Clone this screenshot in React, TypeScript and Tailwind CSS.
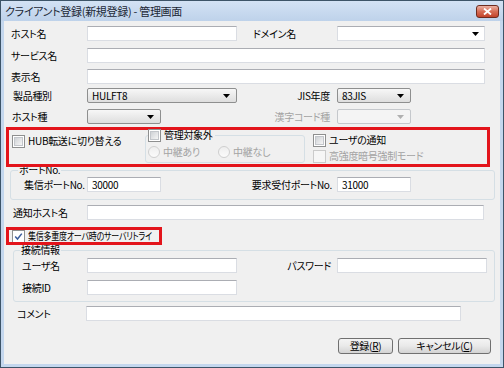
import React from "react";

type BoxProps = { w: string; value?: string };

function Tri({ color = "#000" }: { color?: string }) {
  return (
    <svg width="7" height="4" viewBox="0 0 7 4" className="shrink-0">
      <path d="M0 0h7L3.5 4z" fill={color} />
    </svg>
  );
}

function TextBox({ w, value }: BoxProps) {
  return (
    <div className={`${w} h-[15px] shrink-0 border border-[#dadde3] border-t-[#abadb3] bg-white pl-[4px] text-[10px] leading-[13px]`}>
      {value}
    </div>
  );
}

function ComboEdit({ w }: BoxProps) {
  return (
    <div className={`${w} flex h-[15px] shrink-0 items-center justify-end border border-[#dadde3] border-t-[#abadb3] bg-white pr-[5px]`}>
      <Tri />
    </div>
  );
}

function Select({ w, value, disabled }: BoxProps & { disabled?: boolean }) {
  return (
    <div
      className={`${w} flex h-[15px] shrink-0 items-center justify-between rounded-[2px] border pl-[4px] pr-[6px] text-[10px] leading-[13px] ${
        disabled ? "border-[#c5c8cc] bg-[#f4f4f4]" : "border-[#8e8f8f] bg-linear-to-b from-[#f7f7f7] to-[#dedede]"
      }`}
    >
      <span>{value}</span>
      <Tri color={disabled ? "#b0b0b0" : "#000"} />
    </div>
  );
}

function Check({ checked, disabled }: { checked?: boolean; disabled?: boolean }) {
  return (
    <div
      className={`flex h-[13px] w-[13px] shrink-0 items-center justify-center border ${
        disabled ? "border-[#cbcbcb] bg-[#f6f6f6]" : "border-[#8e8f8f] bg-white"
      }`}
    >
      {!disabled && !checked && <div className="h-[9px] w-[9px] border border-[#c3c6cb] bg-linear-to-br from-[#cfd2d6] to-[#f6f6f6]" />}
      {checked && (
        <svg width="9" height="9" viewBox="0 0 9 9">
          <path d="M1.2 4.6 3.5 7 7.8 1.6" fill="none" stroke="#3a5c9c" strokeWidth="1.5" />
        </svg>
      )}
    </div>
  );
}

function Radio({ label }: { label: string }) {
  return (
    <div className="flex items-center gap-[3px] text-[#a3a3a3]">
      <div className="h-[12px] w-[12px] shrink-0 rounded-full border border-[#cfcfcf] bg-linear-to-b from-[#eeeeee] to-[#fbfbfb]" />
      <span>{label}</span>
    </div>
  );
}

function Button({ w, label, mnemonic }: { w: string; label: string; mnemonic: string }) {
  return (
    <div
      className={`${w} flex h-[16px] items-center justify-center rounded-[3px] border border-[#707070] bg-linear-to-b from-[#f4f4f4] via-[#e9e9e9] to-[#d3d3d3]`}
    >
      {label}(<span className="underline">{mnemonic}</span>)
    </div>
  );
}

export default function App() {
  return (
    <div className="flex h-[368px] w-[504px] flex-col border border-[#3d5468] bg-[#c4d7ee] font-['Noto_Sans_CJK_JP',sans-serif] text-[10px] leading-[14px] tracking-[-0.3px] text-black [font-feature-settings:'palt']">
      {/* Title bar */}
      <div className="flex h-[20px] shrink-0 items-center justify-between bg-linear-to-b from-[#d3e2f4] to-[#bed2ea] pl-[4px] pr-[4px]">
        <span className="text-[11px] text-[#1c2836]">クライアント登録(新規登録) - 管理画面</span>
        <div className="flex h-[13px] w-[23px] items-center justify-center rounded-[3px] border border-[#6e2c1f] bg-linear-to-b from-[#ebb1a4] via-[#d66d55] to-[#c2432a]">
          <svg width="9" height="7" viewBox="0 0 9 7">
            <path d="M1 0.5 8 6.5M8 0.5 1 6.5" stroke="#fff" strokeWidth="1.8" />
          </svg>
        </div>
      </div>

      {/* Client area */}
      <div className="mx-[3px] mb-[3px] flex flex-1 flex-col bg-[#f0f0f0]">
        <div className="mt-[5px] flex h-[15px] items-center">
          <span className="w-[83px] shrink-0 pl-[7px]">ホスト名</span>
          <TextBox w="w-[150px]" />
          <span className="w-[100px] shrink-0 pl-[16px]">ドメイン名</span>
          <ComboEdit w="w-[148px]" />
        </div>

        <div className="mt-[7px] flex h-[15px] items-center">
          <span className="w-[83px] shrink-0 pl-[7px]">サービス名</span>
          <TextBox w="w-[398px]" />
        </div>

        <div className="mt-[6px] flex h-[15px] items-center">
          <span className="w-[83px] shrink-0 pl-[7px]">表示名</span>
          <TextBox w="w-[398px]" />
        </div>

        <div className="mt-[4px] flex h-[15px] items-center">
          <span className="w-[83px] shrink-0 pl-[9px]">製品種別</span>
          <Select w="w-[150px]" value="HULFT8" />
          <span className="w-[100px] shrink-0 pr-[7px] text-right">JIS年度</span>
          <Select w="w-[74px]" value="83JIS" />
        </div>

        <div className="mt-[6px] flex h-[15px] items-center">
          <span className="w-[83px] shrink-0 pl-[8px]">ホスト種</span>
          <Select w="w-[74px]" />
          <span className="w-[176px] shrink-0 pr-[7px] text-right text-[#a3a3a3]">漢字コード種</span>
          <Select w="w-[74px]" disabled />
        </div>

        {/* Highlight 1 */}
        <div className="relative z-10 mt-[3px] ml-[2px] flex h-[40px] w-[484px] border-[3px] border-[#e3141b]">
          <div className="mt-[4px] flex h-[14px] w-[136px] shrink-0 items-center gap-[3px] pl-[3px]">
            <Check />
            <span>HUB転送に切り替える</span>
          </div>
          <fieldset className="-mt-[2px] h-[35px] w-[160px] shrink-0 rounded-[3px] border border-[#d5dfe5] px-[2px]">
            <legend className="flex h-[14px] items-center gap-[3px] pr-[2px]">
              <Check />
              <span>管理対象外</span>
            </legend>
            <div className="mt-[3px] flex h-[14px] items-center">
              <div className="w-[70px]">
                <Radio label="中継あり" />
              </div>
              <Radio label="中継なし" />
            </div>
          </fieldset>
          <div className="ml-[8px] flex flex-col gap-[2px] pt-[3px]">
            <div className="flex h-[14px] items-center gap-[3px]">
              <Check />
              <span>ユーザの通知</span>
            </div>
            <div className="flex h-[14px] items-center gap-[3px]">
              <Check disabled />
              <span className="text-[#a3a3a3]">高強度暗号強制モード</span>
            </div>
          </div>
        </div>

        {/* Port group */}
        <fieldset className="-mt-[4px] ml-[6px] h-[37px] w-[485px] rounded-[3px] border border-[#d5dfe5] pl-[7px]">
          <legend className="px-[1px]">ポートNo.</legend>
          <div className="flex h-[15px] items-center pl-[6px]">
            <span className="w-[63px] shrink-0">集信ポートNo.</span>
            <TextBox w="w-[74px]" value="30000" />
            <span className="w-[176px] shrink-0 pr-[5px] text-right">要求受付ポートNo.</span>
            <TextBox w="w-[74px]" value="31000" />
          </div>
        </fieldset>

        <div className="mt-[5px] flex h-[15px] items-center">
          <span className="w-[83px] shrink-0 pl-[9px]">通知ホスト名</span>
          <TextBox w="w-[397px]" />
        </div>

        {/* Highlight 2 */}
        <div className="relative z-10 mt-[7px] ml-[2px] flex h-[18px] w-[156px] items-center gap-[3px] overflow-hidden border-[3px] border-[#e3141b] pl-[3px]">
          <Check checked />
          <span className="inline-block origin-left scale-x-[0.8] whitespace-nowrap">集信多重度オーバ時のサーバリトライ</span>
        </div>

        {/* Connection group */}
        <fieldset className="-mt-[2px] ml-[9px] h-[59px] w-[482px] rounded-[3px] border border-[#d5dfe5] pl-[6px]">
          <legend className="px-[1px]">接続情報</legend>
          <div className="mt-[1px] flex h-[15px] items-center">
            <span className="w-[67px] shrink-0 pl-[2px]">ユーザ名</span>
            <TextBox w="w-[150px]" />
            <span className="w-[100px] shrink-0 pr-[6px] text-right">パスワード</span>
            <TextBox w="w-[150px]" />
          </div>
          <div className="mt-[7px] flex h-[15px] items-center">
            <span className="w-[67px] shrink-0 pl-[2px]">接続ID</span>
            <TextBox w="w-[150px]" />
          </div>
        </fieldset>

        <div className="mt-[4px] flex h-[15px] items-center">
          <span className="w-[82px] shrink-0 pl-[13px]">コメント</span>
          <TextBox w="w-[375px]" />
        </div>

        <div className="mt-[17px] flex justify-end gap-[5px] pr-[9px]">
          <Button w="w-[55px]" label="登録" mnemonic="R" />
          <Button w="w-[93px]" label="キャンセル" mnemonic="C" />
        </div>
      </div>
    </div>
  );
}
